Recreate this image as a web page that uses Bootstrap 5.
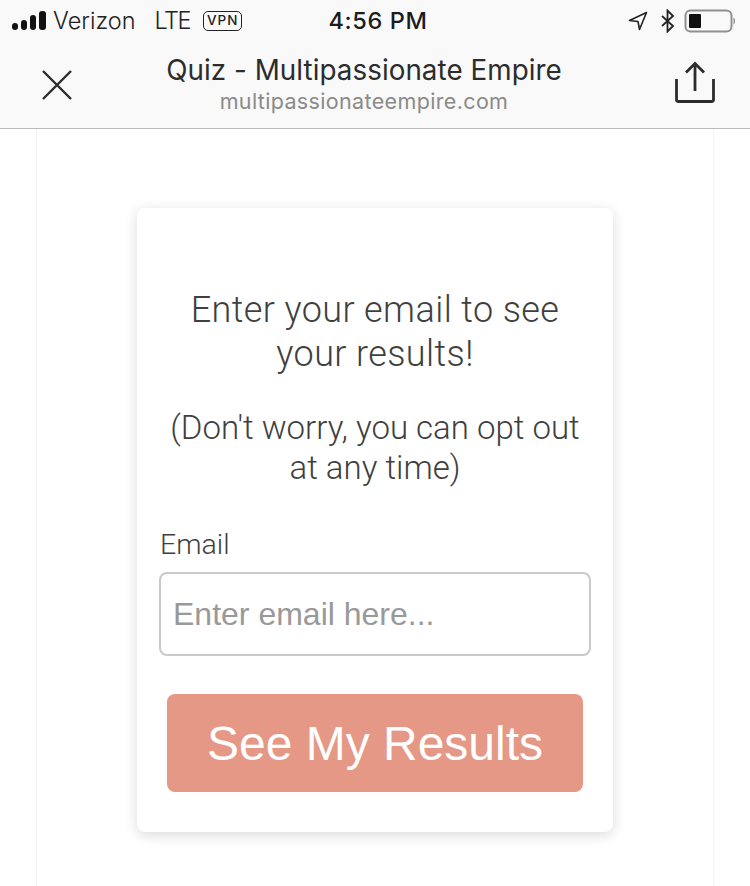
<!DOCTYPE html>
<html lang="en">
<head>
<meta charset="utf-8">
<title>Quiz - Multipassionate Empire</title>
<link href="https://cdn.jsdelivr.net/npm/bootstrap@5.3.0/dist/css/bootstrap.min.css" rel="stylesheet">
<style>
html,body{height:100%;}
body{background:#fff;font-family:"Liberation Sans",Arial,sans-serif;overflow:hidden;}
.shell{height:886px;}
.topchrome{background:#f9f9f9;border-bottom:1px solid #b9b9b9;height:129px;font-family:Inter,"Liberation Sans",sans-serif;color:#2c2c2c;}
.statusline{height:41px;padding:0 14px 0 12px;position:relative;}
.carrier{font-size:23.500px;font-weight:300;color:#222;line-height:1;}
.clock{font-size:23.500px;font-weight:500;color:#1c1c1c;line-height:1;letter-spacing:.6px;margin-left:6px;}
.clockslot{position:absolute;left:0;right:0;top:0;bottom:0;pointer-events:none;}
.vpnmark{font-size:13.500px;font-weight:500;line-height:1;border:1.500px solid #222;border-radius:5px;padding:1px 3px;letter-spacing:1px;margin-left:13px;height:20px;color:#222;}
.lte{margin-left:19px;letter-spacing:-1.500px;}
.sigbars{margin-right:7px;}
.titlerow{height:88px;padding:0 35px 0 41px;}
.pagetext{margin-left:-20px;}
.sharemark{margin-top:-6px;}
.pagehead{font-size:27.800px;font-weight:400;line-height:32px;color:#2c2c2c;letter-spacing:.05px;}
.pagehost{font-size:21.500px;font-weight:400;line-height:31px;color:#8a8a8a;letter-spacing:.35px;}
.sheet{margin:0 36px;height:757px;border-left:1px solid #f3f3f3;border-right:1px solid #f3f3f3;padding-top:79px;}
.quizcard{width:476px;height:624px;border:0;border-radius:8px;box-shadow:0 3px 14px rgba(0,0,0,.15);padding:80px 22px 0;font-family:Roboto,"Liberation Sans",sans-serif;font-weight:300;}
.leadline{font-size:36px;line-height:44px;color:#3f3f3f;text-align:center;margin:0 0 32px;padding:0 10px;letter-spacing:.4px;}
.subline{font-size:33px;line-height:40px;color:#3f3f3f;text-align:center;margin:0 0 41px;}
.mailabel{font-size:28.500px;line-height:32px;color:#3f3f3f;margin:0 0 11px 1px;display:block;}
.mailinput{height:84px;border:2px solid #c9c9c9;border-radius:8px;font-family:"Liberation Sans",sans-serif;font-size:32px;padding:0 12px;color:#333;box-shadow:none;}
.mailinput::placeholder{color:#999;opacity:1;}
.gobtn{display:block;width:416px;height:98px;margin:38px auto 0;background:#e59885;border:0;border-radius:8px;color:#fff;font-family:"Liberation Sans",sans-serif;font-size:48px;line-height:1;padding:2px 0 0;}
.gobtn:hover{background:#e59885;color:#fff;}
</style>
</head>
<body>
<div class="shell d-flex flex-column">
  <header class="topchrome flex-shrink-0">
    <div class="statusline d-flex align-items-center justify-content-between">
      <div class="clockslot d-flex align-items-center justify-content-center"><span class="clock">4:56 PM</span></div>
      <div class="d-flex align-items-center">
        <svg width="34" height="20" viewBox="0 0 34 20" class="sigbars" aria-hidden="true"><rect x="0" y="12" width="6" height="7" rx="3" fill="#111"/><rect x="9" y="9" width="6" height="10" rx="3" fill="#111"/><rect x="18" y="4" width="6" height="15" rx="3" fill="#111"/><rect x="27" y="0" width="7" height="19" rx="3" fill="#111"/></svg>
        <span class="carrier">Verizon</span>
        <span class="carrier lte">LTE</span>
        <span class="vpnmark d-inline-flex align-items-center">VPN</span>
      </div>
      <div class="d-flex align-items-center gap-2">
        <svg width="20" height="20" viewBox="0 0 20 20" class="me-1" aria-hidden="true"><path d="M18.500 1.500 1.500 9.500l8.500 1 1.500 8z" fill="none" stroke="#222" stroke-width="1.600" stroke-linejoin="round"/></svg>
        <svg width="16" height="24" viewBox="0 0 16 24" aria-hidden="true"><path d="M2 7l11 10-5.500 5.500V1.500L13 7 2 17" fill="none" stroke="#222" stroke-width="1.800"/></svg>
        <svg width="52" height="24" viewBox="0 0 52 24" aria-hidden="true"><rect x="1.500" y="1.500" width="46" height="21" rx="5" fill="none" stroke="#8f8f8f" stroke-width="2"/><rect x="5" y="5" width="12" height="14" rx="1" fill="#111"/><path d="M49.500 8.500c2 .5 2 6.500 0 7z" fill="#8f8f8f"/></svg>
      </div>
    </div>
    <div class="titlerow d-flex align-items-center justify-content-between">
      <svg width="32" height="32" viewBox="0 0 32 32" aria-hidden="true"><path d="M2 2l28 28M30 2 2 30" stroke="#2c2c2c" stroke-width="2.400" fill="none"/></svg>
      <div class="text-center pagetext">
        <div class="pagehead">Quiz - Multipassionate Empire</div>
        <div class="pagehost">multipassionateempire.com</div>
      </div>
      <svg width="40" height="42" viewBox="0 0 40 42" class="sharemark" aria-hidden="true"><path d="M20 30V3M11 11.500 20 2.500l9 9M1.500 18v20.500a2 2 0 0 0 2 2h33a2 2 0 0 0 2-2V18" fill="none" stroke="#2c2c2c" stroke-width="2.800"/></svg>
    </div>
  </header>
  <main class="sheet">
    <form class="card quizcard mx-auto bg-white" onsubmit="return false">
      <p class="leadline">Enter your email to see your results!</p>
      <p class="subline">(Don't worry, you can opt out<br>at any time)</p>
      <label class="mailabel" for="mail">Email</label>
      <input id="mail" class="form-control mailinput" type="email" placeholder="Enter email here...">
      <button class="btn gobtn" type="submit">See My Results</button>
    </form>
  </main>
</div>
<script src="https://cdn.jsdelivr.net/npm/bootstrap@5.3.0/dist/js/bootstrap.bundle.min.js"></script>
</body>
</html>
